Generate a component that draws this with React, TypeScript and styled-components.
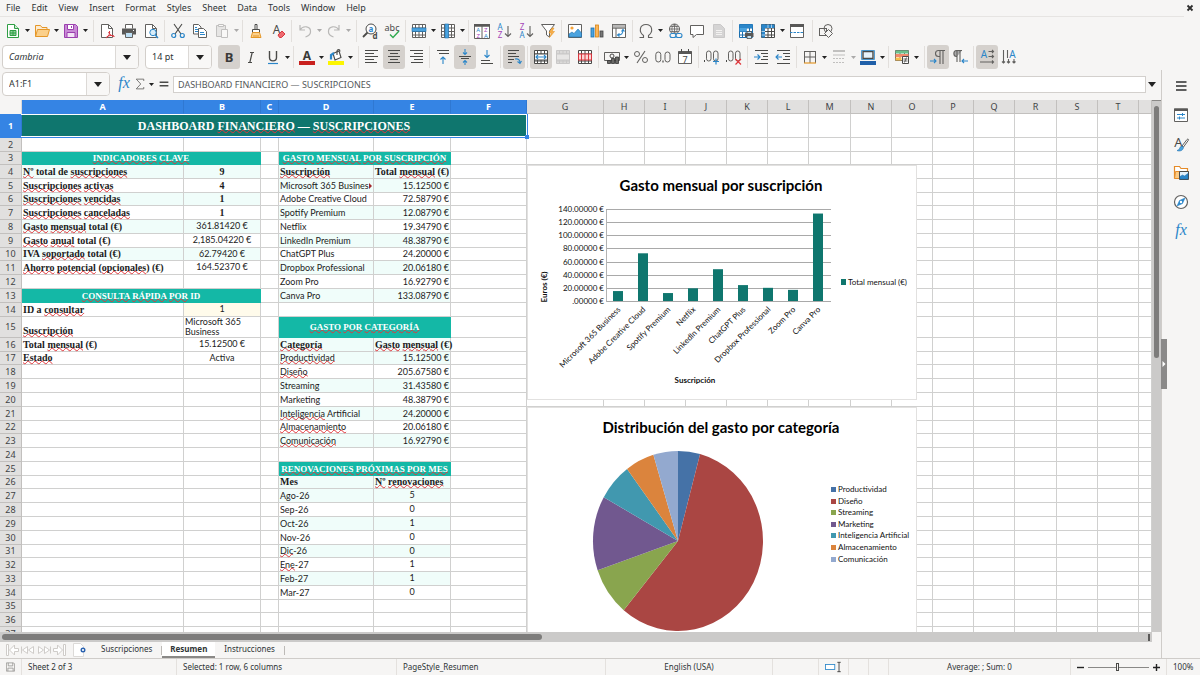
import React from 'react';
import styled, { createGlobalStyle, css } from 'styled-components';

const UI = "'Noto Sans', 'Open Sans', sans-serif";
const CALC = "Lato, 'Noto Sans', sans-serif";
const SERIF = "'Liberation Serif', serif";
const INK = '#4a4a48';
const BLUE = '#2b86c9';
const ACCENT = '#3584e4';
const LINE = '#d0d0cf';

const Global = createGlobalStyle`
  * { box-sizing: border-box; }
  html, body { margin: 0; padding: 0; }
  body { background: #f6f5f4; color: #2e3436; font: 9px/12px ${UI}; overflow: hidden; }
  button, input { font: inherit; color: inherit; margin: 0; padding: 0; border: 0; background: none; outline: none; }
`;

/* ---------- frame ---------- */

const Window = styled.div`
  display: flex;
  flex-direction: column;
  height: 100vh;
  background: #f6f5f4;
`;
const MenuBar = styled.nav`
  display: flex;
  align-items: center;
  flex: none;
  height: 17px;
  margin-right: 16px;
  border-bottom: 1px solid #e6e4e2;
`;
const MenuItem = styled.button`
  height: 16px;
  padding: 0 5px 0 6px;
  line-height: 16px;
`;
const CloseButton = styled.button`
  display: flex;
  margin-left: auto;
  margin-right: -10px;
`;
const Toolbar = styled.div<{ $height: number }>`
  display: flex;
  align-items: center;
  flex: none;
  height: ${(p) => p.$height}px;
  padding-left: 2px;
`;
const ToolButton = styled.button<{ $on?: boolean; $off?: boolean }>`
  display: flex;
  align-items: center;
  justify-content: center;
  flex: none;
  width: 22px;
  height: 24px;
  border-radius: 3px;
  background: ${(p) => (p.$on ? '#d5d1cd' : 'transparent')};
  opacity: ${(p) => (p.$off ? 0.35 : 1)};
`;
const ArrowButton = styled.button<{ $off?: boolean; $width?: number }>`
  display: flex;
  align-items: center;
  justify-content: center;
  flex: none;
  width: ${(p) => p.$width ?? 7}px;
  height: 22px;
  opacity: ${(p) => (p.$off ? 0.35 : 1)};
`;
const Separator = styled.span<{ $wide?: boolean }>`
  flex: none;
  width: 1px;
  height: 22px;
  margin: 0 2px 0 ${(p) => (p.$wide ? 4 : 2)}px;
  background: #e2dfdc;
`;
const Combo = styled.div<{ $width: number }>`
  display: flex;
  flex: none;
  width: ${(p) => p.$width}px;
  height: 24px;
  margin-right: 6px;
  border: 1px solid #d3cfcb;
  border-radius: 4px;
  background: #fff;
  overflow: hidden;
`;
const ComboInput = styled.input<{ $italic?: boolean }>`
  flex: 1;
  min-width: 0;
  padding-left: 6px;
  font-style: ${(p) => (p.$italic ? 'italic' : 'normal')};
`;
const ComboArrow = styled.button`
  display: flex;
  align-items: center;
  justify-content: center;
  width: 23px;
  border-left: 1px solid #dcd9d6;
  background: #f8f7f6;
`;
const Body = styled.div`
  display: flex;
  flex: 1;
  min-height: 0;
`;
const Workspace = styled.main`
  display: flex;
  flex-direction: column;
  flex: 1;
  min-width: 0;
`;
const FormulaBar = styled.div`
  display: flex;
  align-items: center;
  flex: none;
  height: 30px;
  padding: 0 3px 2px 2px;
`;
const FormulaButton = styled(ToolButton)<{ $w: number }>`
  width: ${(p) => p.$w}px;
`;
const FormulaInput = styled.input`
  flex: 1;
  min-width: 0;
  height: 17px;
  padding-left: 4px;
  border: 1px solid #d3d0cd;
  background: #fff;
  color: #55585a;
`;

/* ---------- sheet ---------- */

const SheetArea = styled.div`
  display: flex;
  flex: 1;
  min-height: 0;
`;
const Viewport = styled.div`
  position: relative;
  flex: 1;
  min-width: 0;
  overflow: hidden;
  background: #fff;
`;
const Grid = styled.table`
  table-layout: fixed;
  width: 100%;
  min-width: 1150px;
  border-collapse: separate;
  border-spacing: 0;
`;
const HeadCell = styled.th<{ $on?: boolean }>`
  padding: 0;
  border-right: 1px solid ${(p) => (p.$on ? '#2f78d2' : '#c2c0be')};
  border-bottom: 1px solid ${(p) => (p.$on ? '#3584e4' : '#c2c0be')};
  background: ${(p) => (p.$on ? ACCENT : '#e1e0df')};
  color: ${(p) => (p.$on ? '#fff' : '#3f4345')};
  font-weight: ${(p) => (p.$on ? 700 : 400)};
  line-height: 12px;
`;
const Corner = styled.td`
  padding: 0;
  background: #f6f5f4;
  border-right: 1px solid #dcdad8;
`;

type Kind = 'label' | 'title' | 'banner' | 'name' | 'money' | 'center' | 'centerBold' | 'wrap' | 'empty';
const kinds: Record<Kind, ReturnType<typeof css>> = {
  empty: css``,
  label: css`font: 700 10px/12px ${SERIF}; vertical-align: bottom;`,
  title: css`font: 700 9px/12px ${SERIF}; color: #fff; text-align: center; border-color: #14b8a6;`,
  banner: css`font: 700 12px/16px ${SERIF}; color: #fff; text-align: center; border-color: #0f766e;`,
  name: css`font-family: ${CALC};`,
  money: css`font-family: ${CALC}; text-align: right;`,
  center: css`font-family: ${CALC}; text-align: center; vertical-align: top;`,
  centerBold: css`font: 700 10px/12px ${SERIF}; text-align: center;`,
  wrap: css`font-family: ${CALC}; line-height: 10px; white-space: normal;`,
};
const Cell = styled.td<{ $kind: Kind; $bg?: string }>`
  padding: 0 1px;
  border-right: 1px solid ${LINE};
  border-bottom: 1px solid ${LINE};
  background: ${(p) => p.$bg ?? '#fff'};
  color: #1c1c1c;
  line-height: 12px;
  white-space: nowrap;
  ${(p) => kinds[p.$kind]}
`;
const Misspelt = styled.span`
  text-decoration: underline wavy #e0363b 1px;
  text-decoration-skip-ink: none;
  text-underline-offset: -1px;
`;
const CutText = styled.div`
  display: flex;
  align-items: center;
  justify-content: space-between;
`;
const OverflowMark = styled.span`
  border: 3px solid transparent;
  border-left-color: #a3272b;
  border-right: 0;
`;
const Selection = styled.div`
  position: absolute;
  left: 21px;
  top: 14px;
  width: 507px;
  height: 24px;
  border: solid ${ACCENT};
  border-width: 0 1px 1px 0;
  box-shadow: inset -1px -1px #fff, inset 0 1px #fff;
`;
const FillHandle = styled.span`
  position: absolute;
  right: -2px;
  bottom: -2px;
  width: 4px;
  height: 4px;
  background: ${ACCENT};
`;
const ChartFrame = styled.figure<{ $top: number; $height: number }>`
  position: absolute;
  left: 527px;
  top: ${(p) => p.$top}px;
  width: 390px;
  height: ${(p) => p.$height}px;
  margin: 0;
  border: 1px solid #e2e1e0;
  background: #fff;
`;
const VScroll = styled.div`
  flex: none;
  width: 9px;
  padding: 5px 2px 0;
  background: #cbcac9;
  border-top: 1px solid #8a8987;
`;
const VThumb = styled.div`
  width: 5px;
  height: 252px;
  border-radius: 3px;
  background: #7d7c7b;
`;
const HScroll = styled.div`
  display: flex;
  align-items: center;
  justify-content: space-between;
  flex: none;
  height: 10px;
  margin-right: 9px;
  padding: 0 2px;
  background: #cbcac9;
`;
const HThumb = styled.div`
  width: 47%;
  height: 6px;
  border-radius: 3px;
  background: #7d7c7b;
`;
const SplitGrip = styled.span`
  width: 2px;
  height: 7px;
  background: #5a5958;
`;
const TabBar = styled.div`
  display: flex;
  align-items: center;
  flex: none;
  height: 16px;
  padding-left: 6px;
  font-size: 8px;
`;
const TabIcon = styled.button`
  display: flex;
  margin-right: 6px;
`;
const Tab = styled.button<{ $on?: boolean }>`
  height: 16px;
  padding: 0 ${(p) => (p.$on ? 8 : 9)}px;
  line-height: 14px;
  font-weight: ${(p) => (p.$on ? 700 : 400)};
  background: ${(p) => (p.$on ? '#fff' : 'transparent')};
  border-bottom: 2px solid ${(p) => (p.$on ? '#8a8987' : 'transparent')};
`;
const TabRule = styled.span`
  width: 1px;
  height: 9px;
  background: #bdbab7;
`;

/* ---------- sidebar and status bar ---------- */

const Sidebar = styled.aside`
  position: relative;
  display: flex;
  flex-direction: column;
  align-items: center;
  gap: 5px;
  flex: none;
  width: 39px;
  padding-top: 4px;
  border-left: 1px solid #cfccc9;
`;
const SideHandle = styled.button`
  position: absolute;
  left: -1px;
  top: 269px;
  display: flex;
  align-items: center;
  justify-content: center;
  width: 6px;
  height: 50px;
  background: #8b8a89;
`;
const StatusBar = styled.footer`
  display: grid;
  grid-template-columns: 22px 155fr 220fr 209fr 167fr 46px 30px 20px 20px 182fr 96px 33px;
  flex: none;
  height: 17px;
  border-top: 1px solid #cfccc9;
  font-size: 8px;
`;
const StatusCell = styled.div<{ $center?: boolean }>`
  display: flex;
  align-items: center;
  justify-content: ${(p) => (p.$center ? 'center' : 'flex-start')};
  gap: 4px;
  min-width: 0;
  padding: 0 6px;
  border-right: 1px solid #e4e1de;
  white-space: nowrap;
  &:last-child { border-right: 0; }
`;
const Zoom = styled.input`
  appearance: none;
  flex: 1;
  min-width: 0;
  height: 10px;
  background: linear-gradient(#8a8987, #8a8987) center / 100% 1px no-repeat;
  &::-webkit-slider-thumb {
    appearance: none;
    width: 3px;
    height: 8px;
    border: 1px solid #4a4a48;
    background: #f6f5f4;
  }
`;
const ZoomButton = styled.button`
  display: flex;
`;
const IconSvg = styled.svg`
  overflow: visible;
`;

/* ---------- icons, drawn on a 16 unit square ---------- */

const G = '#62615f';
const s = (d: string, stroke = INK, w = 1, fill = 'none') => (
  <path d={d} stroke={stroke} strokeWidth={w} fill={fill} />
);
const t = (x: number, y: number, str: string, fill = INK, size = 8, weight = 400) => (
  <text x={x} y={y} fill={fill} fontSize={size} fontWeight={weight} fontFamily={UI} textAnchor="middle">{str}</text>
);
const gridPath = 'M1.5 1.5h13v13h-13zM4.5 1.5v13M8 1.5v13M11.5 1.5v13M1.5 5h13M1.5 8.5h13M1.5 12h13';
const docPath = 'M2.5 1.5h7l4 4v9h-11z';
const lines = (ys: [number, number, number][]) => s(ys.map(([y, a, b]) => `M${a} ${y}.5H${b}`).join(''));

const icons: Record<string, React.ReactNode> = {
  new: <>{s('M2.5 1.5h7l4 4v9h-11z', '#2f9e44', 1, '#fff')}{s('M9.5 1.5v4h4', '#2f9e44', 1, '#cdebd2')}{s('M5 7.5h6v5H5zM5 10h6M8 7.5v5', '#2f9e44', 1, '#8fd19b')}</>,
  open: <>{s('M1.5 13.5v-11h5l1.5 2h5v3', '#e59728', 1, '#fdebd0')}{s('M1.5 13.5l2-7h12l-2 7z', '#e59728', 1, '#fbd08b')}</>,
  save: <>{s('M1.5 1.5h11l2 2v11h-13z', '#9b3fae', 1, '#c98ad6')}{s('M4.5 1.5h6v5h-6z', '#9b3fae', 1, '#fff')}{s('M4 9.5h8v5H4z', '#9b3fae', 1, '#f3e3f6')}{s('M8.5 3v2', '#9b3fae')}</>,
  pdf: <>{s(docPath, G, 1, '#fff')}{s('M9.5 1.5v4h4', G)}{s('M7 15c3-2 4-4 3.500-7M9.500 9c1 2.500 3 4 6 4.500M7.500 14c2-1.500 4.500-2 7.500-1', '#d9363e', 1)}</>,
  print: <>{s('M4.500 5.500v-4h7v4', G, 1, '#fff')}<rect x="1" y="5.500" width="14" height="6" fill="#595857" />{s('M4.500 9.500h7v5h-7z', G, 1, '#bfe0f5')}<rect x="12" y="7" width="1" height="1" fill="#fff" /></>,
  preview: <>{s(docPath, G, 1, '#fff')}{s('M9.500 1.500v4h4', G)}<circle cx="10" cy="9.500" r="3.200" fill="#d9edf9" stroke={BLUE} />{s('M12.300 12l2.700 3', BLUE, 1.4)}</>,
  cut: <>{s('M4 1l7 10M12 1L5 11', INK, 1.1)}<circle cx="3.700" cy="12.500" r="2" fill="none" stroke={BLUE} strokeWidth="1.200" /><circle cx="12.300" cy="12.500" r="2" fill="none" stroke={BLUE} strokeWidth="1.200" /></>,
  copy: <>{s('M1.500 1.500h5l2.500 2.500v7h-7.500z', G, 1, '#fff')}{s('M6.500 5.500h5l3 3v6h-8z', G, 1, '#fff')}{s('M3 4.500h2M3 6.500h3M3 8.500h3M8 9.500h4M8 11.500h5', BLUE)}</>,
  paste: <>{s('M2.500 2.500h9v11h-9z', G, 1, '#c9c9c9')}{s('M4.500 1.500h5v2h-5z', G, 1, '#fff')}{s('M7.500 6.500h6v8h-6z', G, 1, '#fff')}</>,
  brush: <>{s('M7 1.500h2v5H7zM4.500 6.500h7v3h-7z', INK, 1, '#fff')}{s('M4.500 9.500h7l1.500 5H3z', '#e59728', 1, '#fbd08b')}{s('M6 14v-2M8 14v-2M10 14v-2', '#e59728')}</>,
  clear: <>{t(6.500, 11, 'A', INK, 12, 400)}{s('M8 12l4-4 3 3-3.500 3.500h-2z', '#d9363e', 1, '#ee6a70')}</>,
  undo: s('M3 2v5h5M3 7c3-5 11-4 10.500 2 0 2-2 4-5 5', INK, 1.2),
  redo: s('M13 2v5H8M13 7C10 2 2 3 2.500 9c0 2 2 4 5 5', INK, 1.2),
  find: <><circle cx="9" cy="6" r="5" fill="#fff" stroke={INK} />{s('M5.500 9.500L1 14', INK, 1.8)}{t(9, 9, 'a', BLUE, 8, 700)}{t(13, 15.500, 'd', INK, 8, 700)}</>,
  spell: <>{t(8, 7.500, 'abc', INK, 9, 400)}{s('M6 11.500l3 3 6-6.500', '#2faa4f', 1.4)}</>,
  rows: <>{s(gridPath, G, 1, '#fff')}<rect x="1" y="5" width="14" height="3.500" fill="#4aa3df" stroke="#1c6fae" strokeWidth=".6" /></>,
  cols: <>{s(gridPath, G, 1, '#fff')}<rect x="5" y="1" width="3.500" height="14" fill="#4aa3df" stroke="#1c6fae" strokeWidth=".6" /></>,
  sort: <>{s('M.5 3h15v12.500H.5zM8 3v12.500', G, 1, '#fff')}<rect x="0" y="1" width="16" height="2.500" fill="#595857" />{t(4.200, 9, 'A', BLUE, 6)}{t(4.200, 14.500, 'Z', '#a444b8', 6)}{t(11.800, 9, 'Z', '#a444b8', 6)}{t(11.800, 14.500, 'A', BLUE, 6)}</>,
  asc: <>{t(4, 7, 'A', BLUE, 8)}{t(4, 15, 'Z', '#a444b8', 8)}{s('M12 3v10.500M9 10.500l3 3 3-3', G, 1.1)}</>,
  desc: <>{t(4, 7, 'Z', '#a444b8', 8)}{t(4, 15, 'A', BLUE, 8)}{s('M12 3v10.500M9 10.500l3 3 3-3', G, 1.1)}</>,
  filter: <>{s('M1.500 1.500h13L9.500 8v6l-3-2V8z', G, 1, '#fff')}{s('M12 5l-3 5h2.500l-2 4.500 5-6H12l2-3.500z', '#e59728', 0.6, '#f9b04d')}</>,
  image: <>{s('M1.500 1.500h13v13h-13z', G, 1, '#fff')}<circle cx="5" cy="5" r="1.600" fill="#f5a33a" />{s('M2 14v-3l3-2 2 1.500L11 6l3.500 4v4z', '#1c6fae', 0.6, '#4aa3df')}</>,
  chart: <><rect x="2" y="5" width="3" height="9" fill="#4aa3df" stroke="#1c6fae" strokeWidth=".8" /><rect x="6.500" y="2" width="3" height="12" fill="#fbb65b" stroke="#d98412" strokeWidth=".8" /><rect x="11" y="8" width="3" height="6" fill="#777" stroke="#444" strokeWidth=".8" /></>,
  pivot: <>{s('M1.500 1.500h13v13h-13zM1.500 5h13M5 1.500v13', G, 1, '#fff')}<rect x="1.500" y="1.500" width="13" height="3.500" fill="#b9b8b7" stroke={G} strokeWidth=".6" />{s('M7 12c3.500 0 5-1.500 5-5M10.500 8.500L12 6.500l1.500 2M8.500 10.500L6.500 12l2 1.500', BLUE, 1.1)}</>,
  omega: s('M1.500 14.500h4v-2C.5 9 1.500 1.500 8 1.500s7.500 7.500 2.500 11v2h4', G, 1.1),
  link: <><circle cx="7.500" cy="6" r="5" fill="none" stroke={G} />{s('M2.500 6h10M7.500 1v10M3.500 3.500h8M3.500 8.500h8M7.500 1C4 4 4 8 7.500 11M7.500 1C11 4 11 8 7.500 11', G, 0.8)}<rect x="3" y="10.500" width="6" height="4" rx="2" fill="#f6f5f4" stroke={BLUE} strokeWidth="1.100" /><rect x="9" y="10.500" width="6" height="4" rx="2" fill="#f6f5f4" stroke={BLUE} strokeWidth="1.100" /></>,
  comment: s('M1.500 2.500h13v9h-7l-3.500 3v-3H1.500z', G, 1, '#fff'),
  headfoot: <>{s(docPath, '#777', 1, '#999')}{s('M5 7.500h6M5 9.500h6M5 11.500h6', '#eee')}</>,
  printarea: <>{s(gridPath, '#1c6fae', 1, '#fff')}<rect x="1.500" y="1.500" width="13" height="3.500" fill="#2b86c9" /><rect x="1.500" y="5" width="7" height="3.500" fill="#4aa3df" /><rect x="7" y="10" width="8.500" height="4" fill="#595857" />{s('M9 12.500h4.500v3H9zM9 10V8.500h4.500V10', INK, 0.8, '#bfe0f5')}</>,
  freeze: <>{s(gridPath, INK, 1, '#fff')}<rect x="1.500" y="1.500" width="13" height="3.500" fill="#2b86c9" /><rect x="1.500" y="1.500" width="3.500" height="13" fill="#2b86c9" />{s('M1.500 8.500H5M1.500 12H5M8 1.500V5M11.500 1.500V5', '#fff', 0.6)}</>,
  split: <>{s('M1.500 2.500h13v12h-13z', G, 1, '#fff')}<rect x="1" y="1" width="14" height="3" fill="#595857" /><path d="M1 9.500h14" stroke={BLUE} strokeDasharray="2.500 1" /></>,
  shapes: <><rect x="1.500" y="5.500" width="7" height="7" fill="none" stroke={G} /><circle cx="10" cy="5.500" r="4" fill="none" stroke={G} />{s('M10.500 6.500l4 4-4 4-4-4z', G, 1, '#f6f5f4')}</>,

  bold: t(8, 12.500, 'B', '#3a3a38', 13, 700),
  italic: s('M7 3.500h4M5 13.500h4M9.200 3.500l-2.400 10', INK, 1.2),
  underline: <>{s('M4.500 2v6.500c0 4.500 7 4.500 7 0V2', INK, 1.4)}{s('M3 14.500h10', BLUE, 1.2)}</>,
  fontcolor: <>{t(8, 10.500, 'A', '#3a3a38', 12, 700)}<rect x="0" y="12" width="16" height="4" fill="#c9211e" /></>,
  highlight: <>{s('M5 4.500l6-2.500 2 6.500-6 2.500z', INK, 1.1, '#fff')}{s('M9 6V2.500c0-2.500 3-2.500 3 0', INK, 1.1)}{s('M3 10.500V6l3-2', BLUE, 2.2)}<rect x="0" y="12" width="16" height="4" fill="#fcf500" /></>,
  left: lines([[1, 1, 14], [4, 1, 10], [7, 1, 14], [10, 1, 10], [13, 1, 13]]),
  center: lines([[1, 2, 14], [4, 4, 12], [7, 2, 14], [10, 4, 12], [13, 2, 14]]),
  right: lines([[1, 2, 15], [4, 6, 15], [7, 2, 15], [10, 6, 15], [13, 3, 15]]),
  top: <>{lines([[1, 2, 14], [4, 4, 14]])}{s('M8 15V8M5.500 10.500L8 8l2.500 2.500', BLUE, 1.1)}</>,
  middle: <>{lines([[7, 2, 14], [9, 4, 12]])}{s('M8 0v5M6 3.500l2 2 2-2M8 16v-4.500M6 13.500l2-2 2 2', BLUE, 1.1)}</>,
  bottom: <>{lines([[11, 2, 11], [14, 2, 14]])}{s('M8 1v7M5.500 6L8 8.500 10.500 6', BLUE, 1.1)}</>,
  wrap: <>{lines([[1, 2, 13], [4, 2, 10], [7, 2, 13], [10, 2, 8], [13, 2, 6]])}{s('M9 10c3-.5 5 .5 5 4M11.500 12.500l2.500 2 1.500-2.500', BLUE, 1.1)}</>,
  merge: <>{s(gridPath, INK, 1, '#fff')}<rect x="1.500" y="5" width="13" height="6" fill="#fff" stroke={INK} />{s('M3 8h10M5 6L3 8l2 2M11 6l2 2-2 2', BLUE, 1.1)}</>,
  mergeoff: <>{s(gridPath, '#777', 1, '#aaa')}<rect x="1.500" y="5" width="13" height="6" fill="#ccc" stroke="#777" /></>,
  unmerge: <>{s(gridPath, INK, 1, '#fff')}<rect x="1.500" y="5" width="13" height="6" fill="#fbd5d6" stroke="#d9363e" />{s('M4.500 5v6M8 5v6M11.500 5v6', '#d9363e')}</>,
  currency: <>{s('M.5 3.500h15v8H.5z', G, 1, '#f6f5f4')}<circle cx="8" cy="7" r="2" fill="none" stroke={INK} />{s('M3.500 11.500v3h3v-3zM7.500 9.500v5h3v-5zM11.500 8v6.500h3V8z', '#333', 0.8, '#6a6967')}</>,
  percent: <><circle cx="4" cy="5" r="2.500" fill="none" stroke={G} /><circle cx="12" cy="11" r="2.500" fill="none" stroke={G} />{s('M12 2L4 14', G, 1.1)}</>,
  number: <><rect x=".8" y="3" width="5" height="10" rx="2.500" fill="none" stroke={G} /><rect x="10" y="3" width="5" height="10" rx="2.500" fill="none" stroke={G} />{s('M8 11.500v2', INK, 1.2)}</>,
  date: <>{s('M1.500 2.500h13v12h-13z', G, 1, '#fff')}<rect x="1" y="2.500" width="14" height="2.500" fill="#595857" />{s('M4.500 0v3M11.500 0v3', INK)}{t(8, 13.500, '7', INK, 9)}</>,
  decadd: <><rect x="2.500" y="2" width="4.500" height="10" rx="2.200" fill="none" stroke={G} /><rect x="9.500" y="2" width="4.500" height="10" rx="2.200" fill="none" stroke={G} />{s('M.5 11v2', INK)}{s('M9 12.500h6M12 9.500v6', BLUE, 1.2)}</>,
  decdel: <><rect x="2.500" y="2" width="4.500" height="10" rx="2.200" fill="none" stroke={G} /><rect x="9.500" y="2" width="4.500" height="10" rx="2.200" fill="none" stroke={G} />{s('M.5 11v2', INK)}{s('M9.500 10l5.500 5.500M15 10l-5.500 5.500', '#e0363b', 1.2)}</>,
  indent: <>{lines([[1, 2, 15], [4, 8, 15], [7, 10, 15], [10, 8, 15], [14, 2, 15]])}{s('M1 8h6M4.500 5.500L7 8l-2.500 2.500', BLUE, 1.1)}</>,
  outdent: <>{lines([[1, 2, 15], [4, 8, 15], [7, 10, 15], [10, 8, 15], [14, 2, 15]])}{s('M1 8h6M3.500 5.500L1 8l2.500 2.500', BLUE, 1.1)}</>,
  borders: <>{s('M2 2.500h12M2.500 2v12M13.500 2v12M8 2v12M2 8h12', G)}{s('M2 14h12', '#e59728', 1.2)}</>,
  linestyle: <>{s('M2 2h12', G, 2)}{s('M2 6h12', G)}<path d="M2 9.500h12M2 13.500h12" stroke={G} strokeDasharray="2 1" /></>,
  linecolor: <>{s('M3 2.500h10v7H3z', INK, 1.400, '#e8f3fb')}{s('M1.500 1.500h13v9h-13z', BLUE, 0.8)}<rect x="0" y="12" width="16" height="4" fill="#1f5fa8" /></>,
  condfmt: <>{s('M1.500 1.500h13v10h-13zM6 1.500v10M10.500 1.500v10', G, 1, '#fff')}<rect x="1.500" y="1.500" width="13" height="3" fill="#6cc08b" /><rect x="1.500" y="5" width="13" height="3" fill="#f08a6c" /><rect x="1.500" y="8.500" width="6" height="3" fill="#f9c04d" />{s('M8.500 7.500h6v7h-6z', INK, 1, '#fff')}{s('M9.500 10h4M9.500 12h4M12.500 8.500l-2 5', INK, 0.8)}</>,
  ltr: <>{s('M10 15V1.500M13 15V1.500M15 1.500H8.500c-4 0-4 6 0 6H10', G, 1.1)}{s('M0 12h6M4 10l2 2-2 2', BLUE, 1.1)}</>,
  rtl: <>{s('M5 13V1.500M8 13V1.500M10 1.500H4.500c-3.500 0-3.500 6 0 6H5', G, 1.1, '#aaa')}{s('M16 12h-6M12 10l-2 2 2 2', BLUE, 1.1)}</>,
  horiz: <>{t(5, 9, 'A', BLUE, 10)}{s('M9.500 2.500h5M13 1l1.500 1.500L13 4M9.500 7.500h5M13 6l1.500 1.500L13 9M1 13h13.500M13 11.500l1.500 1.500-1.500 1.500', G, 1.1)}</>,
  vert: <>{t(11.500, 9, 'A', BLUE, 10)}{s('M2.500 1v13M1 12.500L2.500 14 4 12.500M7.500 10v4M6 12.500L7.500 14 9 12.500M13 10v4M11.500 12.500L13 14l1.500-1.500M6.500 1v8', G, 1.1)}</>,

  fx: <text x="8" y="12" fill={BLUE} fontSize="16" fontStyle="italic" fontFamily="Liberation Serif" textAnchor="middle">fx</text>,
  sigma: s('M13 4V1.500H3L9 8l-6 6.500h10V12', G, 1.1),
  equals: s('M3 6h10M3 10h10', INK, 1.500),
  menu: s('M3 4h10.500M3 8h10.500M3 12h10.500', '#2e2e2e', 1.400),
  props: <>{s('M1.500 2h13v12.500h-13z', G, 1, '#fff')}<rect x="1" y="1.500" width="14" height="2.500" fill="#595857" />{s('M4 7.500h8M4 11h8M9.500 6v3M6.500 9.500v3', BLUE)}</>,
  styles: <>{t(5.500, 11, 'A', INK, 13)}{s('M9 10l5-6.500c1-1 2 0 1.200 1L10.500 11z', INK, 0.9, '#fff')}{s('M4 14.500c3 0 2-4 5-4.500l1.500 1.500C10 15 6 15.500 4 14.500z', '#1c6fae', 0.6, '#4aa3df')}</>,
  gallery: <>{s('M1.500 13.500v-12h5l1.500 2h6.500v3', '#e58b28', 1.200, '#fff')}{s('M1.500 13.500l1-7h13v7z', '#e58b28', 1, '#fbcb86')}{s('M6.500 6.500h9v8h-9z', INK, 1, '#e3f1fb')}{s('M7 14v-2.500l2.500-1.500 2 1 3.500-2.500V14z', '#1c6fae', 0.5, '#2b86c9')}</>,
  navigator: <><circle cx="8" cy="8" r="6.500" fill="#fff" stroke={G} strokeWidth="1.200" />{s('M12 4l-2.500 5.500L4 12l2.500-5.500z', BLUE, 0.6, BLUE)}<circle cx="8" cy="8" r="1.200" fill="#fff" /></>,
};

const Icon = ({ name, size = 16 }: { name: string; size?: number }) => (
  <IconSvg width={size} height={size} viewBox="0 0 16 16" aria-hidden="true">{icons[name]}</IconSvg>
);
const Caret = ({ w = 5 }: { w?: number }) => (
  <svg width={w} height={w === 5 ? 3 : 5} viewBox="0 0 8 5" preserveAspectRatio="none" aria-hidden="true"><path d="M0 0h8L4 5z" fill="#222" /></svg>
);

/* "|" is a separator, "||" a wide one; suffix v = drop-down arrow, * = pressed, ! = disabled */
const standardBar = 'new:v open:v save:v || pdf print preview | cut copy paste:v! | brush clear | undo:v! redo:v! || find spell | rows:v cols:v | sort asc desc filter | image chart pivot | omega:v link comment headfoot:! | printarea freeze:v split || shapes';
const formatBar = 'bold:* italic underline:v | fontcolor:v highlight:v || left center:* right | top middle:* bottom | wrap:* | merge:* mergeoff:! unmerge | currency:v percent number date | decadd decdel | indent outdent | borders:v linestyle:v! linecolor:v | condfmt:v || ltr:* rtl | horiz:* vert';

const Tools = ({ spec }: { spec: string }) => (
  <>
    {spec.split(' ').map((item, i) => {
      if (item[0] === '|') return <Separator key={i} $wide={item.length > 1} />;
      const [name, flags = ''] = item.split(':');
      const off = flags.includes('!');
      return (
        <React.Fragment key={i}>
          <ToolButton $on={flags.includes('*')} $off={off} aria-label={name}><Icon name={name} /></ToolButton>
          {flags.includes('v') && <ArrowButton $off={off} aria-label={`${name} options`}><Caret /></ArrowButton>}
        </React.Fragment>
      );
    })}
  </>
);

/* ---------- sheet data ---------- */

/* the last, unnamed column takes whatever width is left */
const columns: [string, number | undefined][] = [
  ['A', 162], ['B', 77], ['C', 18], ['D', 95], ['E', 77], ['F', 76], ['G', 77], ['H', 41], ['I', 41], ['J', 41],
  ['K', 41], ['L', 41], ['M', 42], ['N', 41], ['O', 41], ['P', 41], ['Q', 41], ['R', 42], ['S', 41], ['T', 41], ['', undefined],
];
const rowHeights = [
  24, 14, 13, 14, 14, 13, 14, 14, 14, 13, 14, 14, 14, 14, 21, 14, 13, 14, 14, 14,
  14, 13, 14, 14, 14, 13, 14, 14, 14, 14, 13, 14, 14, 14, 13, 14, 14,
];

type CellData = { text: string; kind: Kind; bg?: string; span?: number; cut?: boolean };
const MINT = '#f0fdfa';
const TEAL = '#14b8a6';
const cells: Record<string, CellData> = {};
const put = (ref: string, text: string, kind: Kind, extra: Partial<CellData> = {}) => {
  cells[ref] = { text, kind, ...extra };
};

put('A1', 'DASHBOARD ~FINANCIERO~ — ~SUSCRIPCIONES~', 'banner', { span: 6, bg: '#0f766e' });
put('A3', '~INDICADORES~ ~CLAVE~', 'title', { span: 2, bg: TEAL });
([
  ['~Nº~ total de ~suscripciones~', '9'],
  ['~Suscripciones~ ~activas~', '4'],
  ['~Suscripciones~ ~vencidas~', '1'],
  ['~Suscripciones~ ~canceladas~', '1'],
  ['~Gasto~ ~mensual~ total (€)', '361.81420 €'],
  ['~Gasto~ ~anual~ total (€)', '2,185.04220 €'],
  ['IVA ~soportado~ total (€)', '62.79420 €'],
  ['~Ahorro~ ~potencial~ (~opcionales~) (€)', '164.52370 €'],
] as const).forEach(([label, value], i) => {
  const bg = i % 2 ? undefined : MINT;
  put(`A${4 + i}`, label, 'label', { bg });
  put(`B${4 + i}`, value, i < 4 ? 'centerBold' : 'center', { bg });
});
put('A13', '~CONSULTA~ ~RÁPIDA~ ~POR~ ID', 'title', { span: 2, bg: TEAL });
put('A14', 'ID a ~consultar~', 'label');
put('B14', '1', 'center', { bg: '#fffbeb' });
put('A15', '~Suscripción~', 'label');
put('B15', 'Microsoft 365 Business', 'wrap');
put('A16', 'Total ~mensual~ (€)', 'label');
put('B16', '15.12500 €', 'center');
put('A17', '~Estado~', 'label');
put('B17', 'Activa', 'center');

put('D3', '~GASTO~ ~MENSUAL~ ~POR~ ~SUSCRIPCIÓN~', 'title', { span: 2, bg: TEAL });
put('D4', '~Suscripción~', 'label', { bg: MINT });
put('E4', 'Total ~mensual~ (€)', 'label', { bg: MINT });
const plans: [string, number][] = [
  ['Microsoft 365 Business', 15.125], ['Adobe Creative Cloud', 72.5879], ['Spotify Premium', 12.0879],
  ['Netflix', 19.3479], ['LinkedIn Premium', 48.3879], ['ChatGPT Plus', 24.2],
  ['Dropbox Professional', 20.0618], ['Zoom Pro', 16.9279], ['Canva Pro', 133.0879],
];
plans.forEach(([name, value], i) => {
  const bg = i % 2 ? undefined : MINT;
  const cut = i === 0;
  put(`D${5 + i}`, cut ? name.slice(0, -1) : name, 'name', { bg, cut });
  put(`E${5 + i}`, `${value.toFixed(5)} €`, 'money', { bg });
});

put('D15', '~GASTO~ ~POR~ ~CATEGORÍA~', 'title', { span: 2, bg: TEAL });
put('D16', '~Categoría~', 'label', { bg: MINT });
put('E16', '~Gasto~ ~mensual~ (€)', 'label', { bg: MINT });
const categories: [string, string, number, string][] = [
  ['Productividad', '~Productividad~', 15.125, '#4572a7'],
  ['Diseño', '~Diseño~', 205.6758, '#aa4643'],
  ['Streaming', 'Streaming', 31.4358, '#89a54e'],
  ['Marketing', 'Marketing', 48.3879, '#71588f'],
  ['Inteligencia Artificial', '~Inteligencia~ Artificial', 24.2, '#4198af'],
  ['Almacenamiento', '~Almacenamiento~', 20.0618, '#db843d'],
  ['Comunicación', '~Comunicación~', 16.9279, '#93a9cf'],
];
categories.forEach(([, marked, value], i) => {
  const bg = i % 2 ? undefined : MINT;
  put(`D${17 + i}`, marked, 'name', { bg });
  put(`E${17 + i}`, `${value.toFixed(5)} €`, 'money', { bg });
});

put('D25', '~RENOVACIONES~ ~PRÓXIMAS~ ~POR~ ~MES~', 'title', { span: 2, bg: TEAL });
put('D26', 'Mes', 'label', { bg: MINT });
put('E26', '~Nº~ ~renovaciones~', 'label', { bg: MINT });
([['Ago-26', 5], ['Sep-26', 0], ['Oct-26', 1], ['Nov-26', 0], ['~Dic~-26', 0], ['~Ene~-27', 1], ['Feb-27', 1], ['Mar-27', 0]] as const)
  .forEach(([month, count], i) => {
    const bg = i % 2 ? undefined : MINT;
    put(`D${27 + i}`, month, 'name', { bg });
    put(`E${27 + i}`, String(count), 'center', { bg });
  });

const marked = (text: string) =>
  text.split('~').map((part, i) => (i % 2 ? <Misspelt key={i}>{part}</Misspelt> : part));

const SheetRow = ({ n, height }: { n: number; height: number }) => {
  const out: React.ReactNode[] = [];
  for (let c = 0; c < columns.length; c++) {
    const data = cells[`${columns[c][0]}${n}`];
    out.push(
      <Cell key={c} colSpan={data?.span} $kind={data?.kind ?? 'empty'} $bg={data?.bg}>
        {data?.cut ? <CutText>{data.text}<OverflowMark /></CutText> : data && marked(data.text)}
      </Cell>,
    );
    if (data?.span) c += data.span - 1;
  }
  return (
    <tr style={{ height }}>
      <HeadCell scope="row" $on={n === 1}>{n}</HeadCell>
      {out}
    </tr>
  );
};

/* ---------- charts ---------- */

const BarChart = () => {
  const top = 44, base = 136, left = 78, right = 303, step = 25;
  return (
    <svg width="388" height="232" viewBox="0 0 388 232" fontFamily={CALC} fontSize="8" fill="#111">
      <text x="193" y="25" fontSize="15" fontWeight="700" textAnchor="middle" fill="#000">Gasto mensual por suscripción</text>
      {[0, 20, 40, 60, 80, 100, 120, 140].map((v) => {
        const y = Math.round(base - (v / 140) * (base - top));
        return (
          <g key={v}>
            <path d={`M${left} ${y - 0.5}H${right}`} stroke="#a9a9a9" />
            <text x="76" y={y + 2} textAnchor="end">{`${v ? v.toFixed(5) : '.00000'} €`}</text>
          </g>
        );
      })}
      <path d={`M${left + 0.5} ${top}V${base}`} stroke="#b3b3b3" />
      {plans.map(([name, value], i) => {
        const h = (value / 140) * (base - top);
        const x = left + 12 + i * step;
        return (
          <g key={name}>
            <rect x={x - 5} y={base - h - 1} width="10" height={h} fill="#0f766e" />
            <text transform={`translate(${x + 3} 144) rotate(-45)`} textAnchor="end">{name}</text>
          </g>
        );
      })}
      <text transform="translate(19 121) rotate(-90)" fontWeight="700" textAnchor="middle">Euros (€)</text>
      <text x="167" y="217" fontWeight="700" textAnchor="middle">Suscripción</text>
      <rect x="313" y="113" width="5" height="6" fill="#0f766e" />
      <text x="320" y="119">Total mensual (€)</text>
    </svg>
  );
};

const PieChart = () => {
  const cx = 150, cy = 133, rx = 85, ry = 90;
  const total = categories.reduce((sum, c) => sum + c[2], 0);
  let turned = 0;
  const point = (f: number) => `${cx + rx * Math.sin(f * 2 * Math.PI)} ${cy - ry * Math.cos(f * 2 * Math.PI)}`;
  return (
    <svg width="388" height="232" viewBox="0 0 388 232" fontFamily={CALC} fontSize="8" fill="#111">
      <text x="193" y="25" fontSize="15" fontWeight="700" textAnchor="middle" fill="#000">Distribución del gasto por categoría</text>
      {categories.map(([name, , value, color], i) => {
        const from = turned;
        turned += value / total;
        return (
          <g key={name}>
            <path d={`M${cx} ${cy}L${point(from)}A${rx} ${ry} 0 ${value / total > 0.5 ? 1 : 0} 1 ${point(turned)}z`} fill={color} />
            <rect x="303" y={79 + Math.round(i * 11.6)} width="5" height="5" fill={color} />
            <text x="310" y={84 + Math.round(i * 11.6)}>{name}</text>
          </g>
        );
      })}
    </svg>
  );
};

/* ---------- page ---------- */

const menus = ['File', 'Edit', 'View', 'Insert', 'Format', 'Styles', 'Sheet', 'Data', 'Tools', 'Window', 'Help'];

export default function App() {
  return (
    <Window>
      <Global />
      <MenuBar>
        {menus.map((m) => <MenuItem key={m}>{m}</MenuItem>)}
        <CloseButton aria-label="Close document">
          <svg width="8" height="8" viewBox="0 0 8 8"><path d="M1.500 1.500l5 5M6.500 1.500l-5 5" stroke="#2e2e2e" strokeWidth="1.800" /></svg>
        </CloseButton>
      </MenuBar>
      <Toolbar $height={27} role="toolbar" aria-label="Standard"><Tools spec={standardBar} /></Toolbar>
      <Toolbar $height={26} role="toolbar" aria-label="Formatting">
        <Combo $width={137}>
          <ComboInput $italic aria-label="Font name" defaultValue="Cambria" />
          <ComboArrow aria-label="Font list"><Caret w={8} /></ComboArrow>
        </Combo>
        <Combo $width={67}>
          <ComboInput aria-label="Font size" defaultValue="14 pt" />
          <ComboArrow aria-label="Size list"><Caret w={8} /></ComboArrow>
        </Combo>
        <Tools spec={formatBar} />
      </Toolbar>
      <Body>
        <Workspace>
          <FormulaBar>
            <Combo $width={108}>
              <ComboInput aria-label="Name box" defaultValue="A1:F1" />
              <ComboArrow aria-label="Name list"><Caret w={8} /></ComboArrow>
            </Combo>
            <FormulaButton $w={16} aria-label="Function wizard"><Icon name="fx" /></FormulaButton>
            <FormulaButton $w={16} aria-label="Select function"><Icon name="sigma" size={12} /></FormulaButton>
            <ArrowButton aria-label="Function options"><Caret /></ArrowButton>
            <FormulaButton $w={18} aria-label="Formula"><Icon name="equals" size={14} /></FormulaButton>
            <FormulaInput aria-label="Input line" defaultValue="DASHBOARD FINANCIERO — SUSCRIPCIONES" />
            <ArrowButton $width={12} aria-label="Expand formula bar"><Caret w={8} /></ArrowButton>
          </FormulaBar>
          <SheetArea>
            <Viewport>
              <Grid>
                <colgroup>
                  <col style={{ width: 22 }} />
                  {columns.map(([, w], i) => <col key={i} style={{ width: w }} />)}
                </colgroup>
                <thead>
                  <tr style={{ height: 14 }}>
                    <Corner />
                    {columns.map(([c], i) => <HeadCell key={i} scope="col" $on={i < 6}>{c}</HeadCell>)}
                  </tr>
                </thead>
                <tbody>
                  {rowHeights.map((h, i) => <SheetRow key={i} n={i + 1} height={h} />)}
                </tbody>
              </Grid>
              <Selection><FillHandle /></Selection>
              <ChartFrame $top={65} $height={235}><BarChart /></ChartFrame>
              <ChartFrame $top={307} $height={235}><PieChart /></ChartFrame>
            </Viewport>
            <VScroll><VThumb /></VScroll>
          </SheetArea>
          <HScroll><HThumb /><SplitGrip /></HScroll>
          <TabBar>
            <TabIcon aria-label="Scroll sheets">
              <svg width="60" height="14" viewBox="0 0 60 14" fill="#fff" stroke="#cfccc9">
                <path d="M.5 1.500h2v11h-2zM57.500 1.500h2v11h-2zM3.500 7l5-5v3.500h4v3h-4V12zM56.500 7l-5-5v3.500h-4v3h4V12zM15.500 3.500v7M16.500 7l5-3.500v7zM22.500 7l5-3.500v7zM44.500 3.500v7M43.500 7l-5-3.500v7zM37.500 7l-5-3.500v7z" />
              </svg>
            </TabIcon>
            <TabIcon aria-label="Add sheet">
              <svg width="14" height="14" viewBox="0 0 14 14">
                <path d="M1.500.5h7l3 3v10h-10z" fill="#fff" stroke="#dcdad8" />
                <circle cx="11" cy="7" r="1.800" fill="#fff" stroke="#2a62b0" strokeWidth="1.400" />
              </svg>
            </TabIcon>
            <Tab>Suscripciones</Tab>
            <TabRule />
            <Tab $on>Resumen</Tab>
            <Tab>Instrucciones</Tab>
            <TabRule />
          </TabBar>
        </Workspace>
        <Sidebar>
          {['menu', 'props', 'styles', 'gallery', 'navigator', 'fx'].map((n) => (
            <ToolButton key={n} aria-label={n}><Icon name={n} /></ToolButton>
          ))}
          <SideHandle aria-label="Collapse sidebar">
            <svg width="4" height="6" viewBox="0 0 4 6"><path d="M.5 0l3 3-3 3z" fill="#fff" /></svg>
          </SideHandle>
        </Sidebar>
      </Body>
      <StatusBar>
        <StatusCell>
          <svg width="12" height="12" viewBox="0 0 12 12" fill="none" stroke="#8f8d8b"><path d="M.5.5h9.500l1.500 1.500v9.500H.5zM3 .5v4h6v-4M2.500 11.500v-4h7v4" /></svg>
        </StatusCell>
        <StatusCell>Sheet 2 of 3</StatusCell>
        <StatusCell>Selected: 1 row, 6 columns</StatusCell>
        <StatusCell>PageStyle_Resumen</StatusCell>
        <StatusCell $center>English (USA)</StatusCell>
        <StatusCell />
        <StatusCell>
          <svg width="20" height="12" viewBox="0 0 20 12" fill="none">
            <rect x=".5" y="3" width="11" height="6" fill="#fff" stroke={BLUE} />
            <path d="M14.500.5h4M14.500 11.500h4M16.500.5v11" stroke="#333" />
          </svg>
        </StatusCell>
        <StatusCell />
        <StatusCell />
        <StatusCell $center>Average: ; Sum: 0</StatusCell>
        <StatusCell>
          <ZoomButton aria-label="Zoom out"><svg width="7" height="7" viewBox="0 0 7 7"><path d="M0 3.500h7" stroke="#222" strokeWidth="1.400" /></svg></ZoomButton>
          <Zoom type="range" aria-label="Zoom" min={0} max={100} defaultValue={48} />
          <ZoomButton aria-label="Zoom in"><svg width="7" height="7" viewBox="0 0 7 7"><path d="M0 3.500h7M3.500 0v7" stroke="#222" strokeWidth="1.400" /></svg></ZoomButton>
        </StatusCell>
        <StatusCell>100%</StatusCell>
      </StatusBar>
    </Window>
  );
}
